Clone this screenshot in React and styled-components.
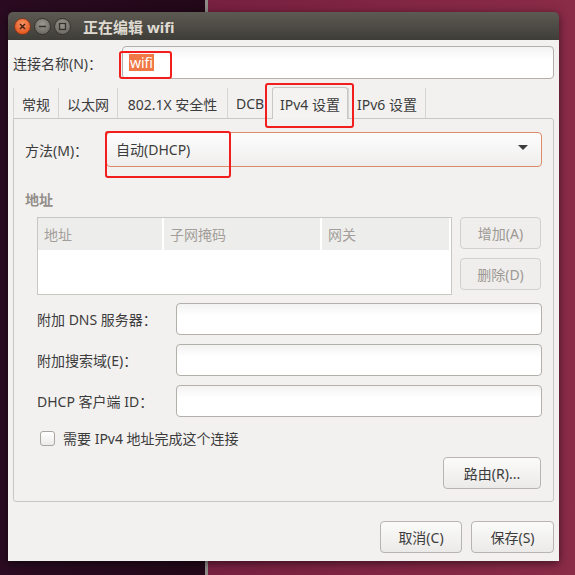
import React from "react";
import styled, { createGlobalStyle } from "styled-components";

const GlobalStyle = createGlobalStyle`
  html, body {
    margin: 0;
    padding: 0;
  }
  body {
    font-family: "Noto Sans", "Noto Sans CJK SC", sans-serif;
    font-size: 14px;
    color: #3c3c3c;
  }
  * {
    box-sizing: border-box;
  }
`;

const Desktop = styled.div`
  width: 575px;
  height: 575px;
  padding: 12px 0 0 8px;
  overflow: hidden;
  background: linear-gradient(
    90deg,
    #2a0b21 0,
    #220818 205px,
    #8e8b87 205px,
    #8e8b87 208px,
    #772040 208px,
    #8a2b47 100%
  );
`;

const Window = styled.div`
  width: 551px;
  height: 549px;
  display: flex;
  flex-direction: column;
  border-radius: 5px 5px 0 0;
  overflow: hidden;
  box-shadow: 0 2px 9px rgba(0, 0, 0, 0.55);
`;

const TitleBar = styled.div`
  height: 28px;
  flex: none;
  display: flex;
  align-items: center;
  padding-left: 6px;
  background: linear-gradient(#5c5a52, #3f3d38);
`;

const WinButtons = styled.div`
  display: flex;
  gap: 3px;
`;

const WinButton = styled.div`
  width: 17px;
  height: 17px;
  border-radius: 50%;
  display: flex;
  align-items: center;
  justify-content: center;
  border: 1px solid ${(p) => (p.$close ? "#7a3820" : "#34332f")};
  background: ${(p) =>
    p.$close
      ? "radial-gradient(circle at 50% 35%, #f9986a, #e3561f 75%)"
      : "radial-gradient(circle at 50% 35%, #9b9991, #6d6b64 75%)"};
`;

const Title = styled.div`
  margin-left: 12px;
  font-family: "Noto Sans", "Noto Sans CJK SC", sans-serif;
  font-weight: 700;
  font-size: 15px;
  color: #dfdbd2;
`;

const Body = styled.div`
  flex: 1;
  background: #f2f1f0;
  padding: 6px 5px 8px 5px;
  display: flex;
  flex-direction: column;
`;

const Row = styled.div`
  display: flex;
  align-items: center;
`;

const Label = styled.div`
  width: ${(p) => p.$w}px;
  flex: none;
  white-space: nowrap;
  color: #3c3c3c;
`;

const Anchor = styled.div`
  position: relative;
  flex: ${(p) => (p.$grow ? 1 : "none")};
  display: flex;
`;

const Annot = styled.div`
  position: absolute;
  left: ${(p) => p.$l}px;
  top: ${(p) => p.$t}px;
  width: ${(p) => p.$w}px;
  height: ${(p) => p.$h}px;
  border: 2px solid #f21d1d;
  border-radius: 3px;
  pointer-events: none;
  z-index: 5;
`;

const TextInput = styled.div`
  flex: 1;
  height: ${(p) => p.$h || 32}px;
  display: flex;
  align-items: center;
  padding-left: 6px;
  border: 1px solid #b3b0ab;
  border-radius: 4px;
  background: linear-gradient(#f3f3f3, #ffffff 40%);
`;

const Selected = styled.span`
  background: #f07746;
  color: #ffffff;
  padding: 0 1px;
  line-height: 17px;
`;

const Tabs = styled.div`
  margin-top: 8px;
  height: 31px;
  display: flex;
  align-items: flex-end;
  position: relative;
  z-index: 2;
`;

const Tab = styled.div`
  width: ${(p) => p.$w}px;
  height: ${(p) => (p.$active ? 32 : 30)}px;
  margin-bottom: ${(p) => (p.$active ? -1 : 0)}px;
  display: flex;
  align-items: center;
  justify-content: center;
  padding-top: ${(p) => (p.$active ? 0 : 1)}px;
  white-space: nowrap;
  color: #3c3c3c;
  border-left: 1px solid #d7d5d1;
  ${(p) =>
    p.$active
      ? `
    border: 1px solid #c9c7c3;
    border-bottom: none;
    border-radius: 3px 3px 0 0;
    background: #f4f3f2;
  `
      : ""}
  ${(p) => (p.$last ? "border-right: 1px solid #d7d5d1;" : "")}
`;

const Frame = styled.div`
  border: 1px solid #c9c7c3;
  border-radius: 0 3px 3px 3px;
  padding: 13px 11px 12px 11px;
  display: flex;
  flex-direction: column;
`;

const Combo = styled.div`
  flex: 1;
  height: 35px;
  display: flex;
  align-items: center;
  justify-content: space-between;
  padding: 0 13px 2px 9px;
  border: 1px solid #dc8c69;
  border-radius: 4px;
  background: linear-gradient(#fdfdfd, #efeeed);
`;

const Arrow = styled.div`
  width: 0;
  height: 0;
  border-left: 5px solid transparent;
  border-right: 5px solid transparent;
  border-top: 5px solid #3c3c3c;
  margin-top: -2px;
`;

const SectionTitle = styled.div`
  margin-top: 24px;
  line-height: 18px;
  font-weight: 700;
  color: #938e89;
`;

const Section = styled.div`
  padding-left: 12px;
  display: flex;
  flex-direction: column;
`;

const AddrRow = styled.div`
  margin-top: 8px;
  display: flex;
  gap: 8px;
`;

const Table = styled.div`
  flex: 1;
  height: 78px;
  border: 1px solid #c9c7c3;
  background: #ffffff;
`;

const TableHead = styled.div`
  height: 32px;
  display: flex;
  gap: 2px;
  padding-right: 2px;
`;

const HeadCell = styled.div`
  width: ${(p) => (p.$w ? `${p.$w}px` : "auto")};
  flex: ${(p) => (p.$w ? "none" : 1)};
  background: #ededec;
  color: #a39e99;
  display: flex;
  align-items: center;
  padding-left: 6px;
`;

const SideButtons = styled.div`
  width: 81px;
  margin-right: 1px;
  display: flex;
  flex-direction: column;
  gap: 9px;
`;

const Button = styled.div`
  width: ${(p) => (p.$w ? `${p.$w}px` : "100%")};
  height: 32px;
  flex: none;
  display: flex;
  align-items: center;
  justify-content: center;
  border-radius: 4px;
  white-space: nowrap;
  border: 1px solid ${(p) => (p.$disabled ? "#d2d0cc" : "#b8b5b1")};
  color: ${(p) => (p.$disabled ? "#9d9994" : "#3c3c3c")};
  background: ${(p) =>
    p.$disabled ? "#efeeec" : "linear-gradient(#fbfbfa, #ebeae8)"};
`;

const Fields = styled.div`
  margin-top: 8px;
  display: flex;
  flex-direction: column;
  gap: 9px;
`;

const CheckRow = styled.div`
  margin-top: 11px;
  height: 20px;
  display: flex;
  align-items: center;
  gap: 8px;
  padding-left: 3px;
`;

const Checkbox = styled.div`
  width: 15px;
  height: 15px;
  border: 1px solid #a9a6a1;
  border-radius: 3px;
  background: linear-gradient(#ffffff, #ecebea);
`;

const ButtonBar = styled.div`
  margin-top: ${(p) => p.$mt}px;
  margin-right: ${(p) => p.$mr || 0}px;
  display: flex;
  justify-content: flex-end;
  gap: 9px;
`;

const CloseIcon = () => (
  <svg width="9" height="9" viewBox="0 0 9 9">
    <path d="M2 2 L7 7 M7 2 L2 7" stroke="#4a2414" strokeWidth="1.6" />
  </svg>
);

const MinIcon = () => (
  <svg width="9" height="9" viewBox="0 0 9 9">
    <path d="M1 4.5 H8" stroke="#33322e" strokeWidth="1.6" />
  </svg>
);

const MaxIcon = () => (
  <svg width="9" height="9" viewBox="0 0 9 9">
    <rect x="1.5" y="1.5" width="6" height="6" fill="none" stroke="#33322e" strokeWidth="1.3" />
  </svg>
);

const tabs = [
  { label: "常规", w: 45 },
  { label: "以太网", w: 59 },
  { label: "802.1X 安全性", w: 110 },
  { label: "DCB", w: 45 },
  { label: "IPv4 设置", w: 76, active: true },
  { label: "IPv6 设置", w: 78 },
];

const fields = ["附加 DNS 服务器：", "附加搜索域(E)：", "DHCP 客户端 ID："];

export default function App() {
  return (
    <>
      <GlobalStyle />
      <Desktop>
        <Window>
          <TitleBar>
            <WinButtons>
              <WinButton $close>
                <CloseIcon />
              </WinButton>
              <WinButton>
                <MinIcon />
              </WinButton>
              <WinButton>
                <MaxIcon />
              </WinButton>
            </WinButtons>
            <Title>正在编辑 wifi</Title>
          </TitleBar>
          <Body>
            <Row>
              <Label $w={109}>连接名称(N)：</Label>
              <Anchor $grow>
                <TextInput $h={33}>
                  <Selected>wifi</Selected>
                </TextInput>
                <Annot $l={-3} $t={5} $w={53} $h={28} />
              </Anchor>
            </Row>

            <Tabs>
              {tabs.map((t, i) =>
                t.active ? (
                  <Anchor key={t.label}>
                    <Tab $w={t.w} $active>
                      {t.label}
                    </Tab>
                    <Annot $l={-7} $t={-4} $w={89} $h={45} />
                  </Anchor>
                ) : (
                  <Tab key={t.label} $w={t.w} $last={i === tabs.length - 1}>
                    {t.label}
                  </Tab>
                )
              )}
            </Tabs>

            <Frame>
              <Row>
                <Label $w={81}>方法(M)：</Label>
                <Anchor $grow>
                  <Combo>
                    <span>自动(DHCP)</span>
                    <Arrow />
                  </Combo>
                  <Annot $l={-1} $t={-1} $w={126} $h={47} />
                </Anchor>
              </Row>

              <SectionTitle>地址</SectionTitle>
              <Section>
                <AddrRow>
                  <Table>
                    <TableHead>
                      <HeadCell $w={124}>地址</HeadCell>
                      <HeadCell $w={156}>子网掩码</HeadCell>
                      <HeadCell>网关</HeadCell>
                    </TableHead>
                  </Table>
                  <SideButtons>
                    <Button $disabled>增加(A)</Button>
                    <Button $disabled>删除(D)</Button>
                  </SideButtons>
                </AddrRow>

                <Fields>
                  {fields.map((f) => (
                    <Row key={f}>
                      <Label $w={139}>{f}</Label>
                      <TextInput />
                    </Row>
                  ))}
                </Fields>

                <CheckRow>
                  <Checkbox />
                  <span>需要 IPv4 地址完成这个连接</span>
                </CheckRow>

                <ButtonBar $mt={9} $mr={1}>
                  <Button $w={98}>路由(R)...</Button>
                </ButtonBar>
              </Section>
            </Frame>

            <ButtonBar $mt={19}>
              <Button $w={82}>取消(C)</Button>
              <Button $w={83}>保存(S)</Button>
            </ButtonBar>
          </Body>
        </Window>
      </Desktop>
    </>
  );
}
